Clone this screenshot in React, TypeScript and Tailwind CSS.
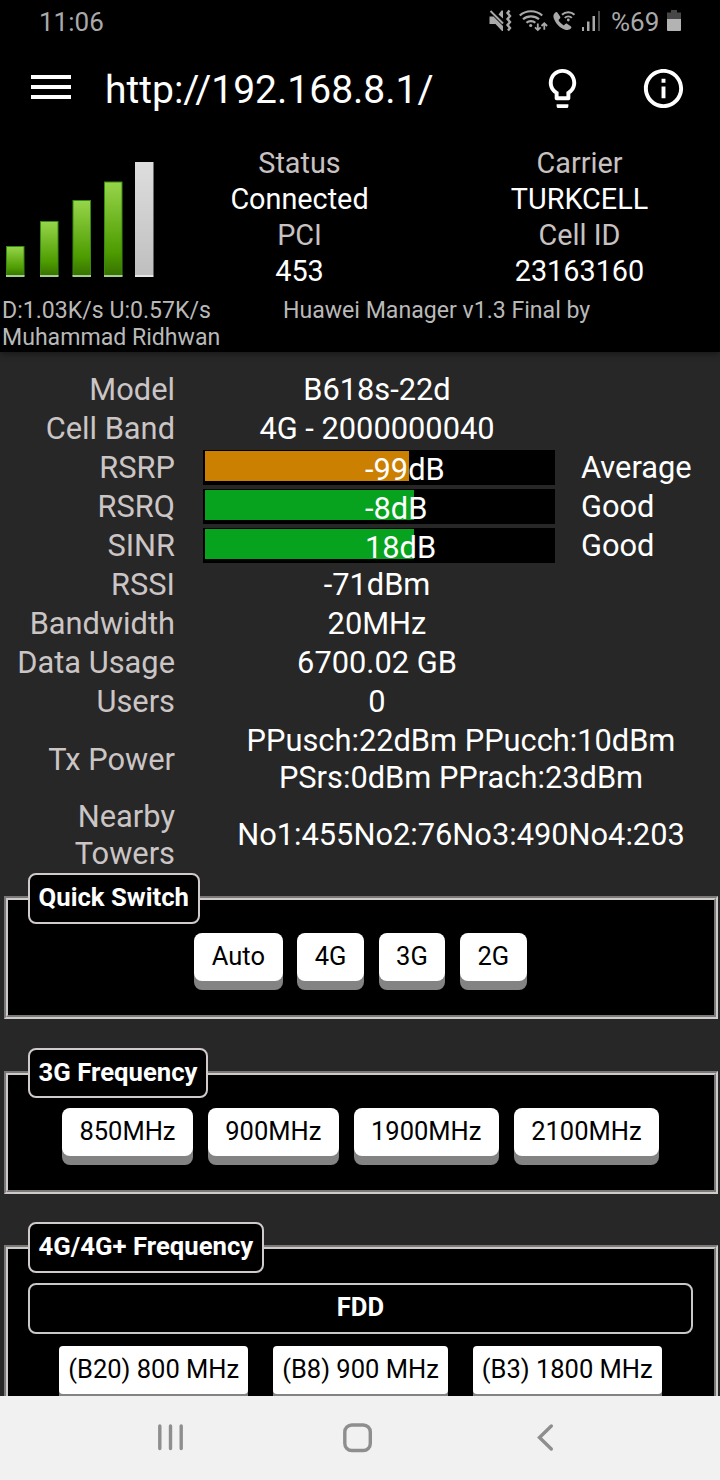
import React from "react";
import { clsx } from "clsx";
import { MdInfoOutline, MdLightbulbOutline } from "react-icons/md";

interface SignalRow {
    label: string;
    value: string;
    percent: number;
    color: string;
    quality: string;
}

const signalBars = [
    { x: 6, top: 246 },
    { x: 40, top: 221 },
    { x: 72.5, top: 200 },
    { x: 104, top: 181.5 },
];

const signalRows: SignalRow[] = [
    {
        label: "RSRP",
        value: "-99dB",
        percent: 58.6,
        color: "bg-[#cb8001]",
        quality: "Average",
    },
    {
        label: "RSRQ",
        value: "-8dB",
        percent: 60,
        color: "bg-[#08a31e]",
        quality: "Good",
    },
    {
        label: "SINR",
        value: "18dB",
        percent: 60,
        color: "bg-[#08a31e]",
        quality: "Good",
    },
];

const StatusBar: React.FC = () => (
    <div className="flex h-11 items-center pl-[39px] text-[26px] leading-none text-[#a9a9a9]">
        <span className="w-[447px]">11:06</span>
        <svg width="120" height="44" viewBox="486 0 120 44" fill="#a9a9a9">
            <path d="M489.500 16.500h4l9.500 9.500v5h-1l-6.500-7h-6zM498.500 14.500l3-4h1.500v8z" />
            <path
                d="M490.500 11l12.500 12.500"
                stroke="#a9a9a9"
                strokeWidth="2"
                fill="none"
            />
            <path
                d="M509.500 10.500l-2 2.500 2.500 3-2.500 3 2.500 3-2.500 3 2.500 3-2 2.500"
                stroke="#a9a9a9"
                strokeWidth="2.400"
                fill="none"
            />
            <g fill="none" stroke="#a9a9a9" strokeWidth="2.200">
                <path d="M519.800 15.500c6-5.700 16.400-5.700 22.400 0" />
                <path d="M523 19.300c4.300-4 11.700-4 16 0" />
                <path d="M526.500 22.800c2.300-2.200 6.500-2.200 8.800 0" />
                <path d="M537.800 23.500v6.500M535 27.300l2.800 2.800 2.800-2.800" strokeWidth="1.800" />
                <path d="M544.300 29.700v-6.500M541.500 26l2.800-2.800 2.800 2.800" strokeWidth="1.800" />
            </g>
            <circle cx="530.700" cy="25.500" r="1.600" />
            <path d="M555 12.800c1-1 2-.9 2.700.1l2.400 3.700c.5.900.3 1.500-.4 2.200l-1.200 1.200c1.100 2.300 3 4.200 5.400 5.400l1.300-1.300c.7-.7 1.400-.8 2.200-.2l3.300 2.300c.9.700.9 1.600.1 2.400-1.500 1.500-3.300 1.800-5.600 1.100-5-1.500-9.500-6.300-11.400-11.300-.8-2.300-.4-4.100 1.200-5.600z" />
            <g fill="none" stroke="#a9a9a9" strokeWidth="2">
                <path d="M562 14.800c3.500-3.500 9-3.500 12.500 0" />
                <path d="M564.800 17.900c2-2 5-2 7 0" />
            </g>
            <circle cx="568.300" cy="20" r="1.400" />
            <path d="M582 27h2v4h-2zM587 21.500h2.500V31h-2.500zM592.500 16h2.500v15h-2.500z" />
            <path d="M598 11h2v20h-2z" fill="#4c4c4c" />
        </svg>
        <span className="ml-[5px] w-[56px]">%69</span>
        <svg width="14" height="44" viewBox="667 0 14 44">
            <path d="M671 10h6v2.500h4V19h-14v-6.500h4z" fill="#474747" />
            <path d="M667 19h14v11a1 1 0 0 1-1 1h-12a1 1 0 0 1-1-1z" fill="#b3b3b3" />
        </svg>
    </div>
);

const Toolbar: React.FC = () => (
    <div className="flex h-[90px] items-center pl-[31px]">
        <div className="flex w-10 flex-col gap-1.5 pb-1">
            <span className="h-1 bg-white" />
            <span className="h-1 bg-white" />
            <span className="h-1 bg-white" />
        </div>
        <h1 className="mt-0.5 ml-[34px] flex-1 text-[39px] leading-none">
            http://192.168.8.1/
        </h1>
        <MdLightbulbOutline className="-mt-0.5 mr-[54px] size-[47px]" />
        <MdInfoOutline className="-mt-0.5 mr-[33px] size-[47px]" />
    </div>
);

const SignalMeter: React.FC = () => (
    <svg width="160" height="144" viewBox="0 145 160 144" className="shrink-0">
        <defs>
            <linearGradient id="green" x1="0" y1="0" x2="0" y2="1">
                <stop offset="0" stopColor="#97d54a" />
                <stop offset="0.75" stopColor="#4d9c00" />
                <stop offset="1" stopColor="#377100" />
            </linearGradient>
            <linearGradient id="gray" x1="0" y1="0" x2="0" y2="1">
                <stop offset="0" stopColor="#dedede" />
                <stop offset="1" stopColor="#bfbfbf" />
            </linearGradient>
        </defs>
        {signalBars.map((bar) => (
            <g key={bar.x}>
                <rect
                    x={bar.x + 0.5}
                    y={bar.top + 0.5}
                    width="17.500"
                    height={275 - bar.top}
                    fill="url(#green)"
                    stroke="#368a12"
                />
                <rect x={bar.x} y="275" width="18.500" height="2" fill="#a6cf98" />
            </g>
        ))}
        <rect x="135" y="162" width="18.500" height="113" fill="url(#gray)" />
        <rect x="135" y="275" width="18.500" height="2" fill="#e6e6e6" />
    </svg>
);

const Stats: React.FC<{ items: [string, string][] }> = ({ items }) => (
    <div className="flex-1 pr-px text-center text-[28.8px] leading-9">
        {items.map(([label, value]) => (
            <React.Fragment key={label}>
                <p className="text-[#c8c2c2]">{label}</p>
                <p>{value}</p>
            </React.Fragment>
        ))}
    </div>
);

const InfoRow: React.FC<
    React.PropsWithChildren<{ label: string; wide?: boolean }>
> = ({ label, wide, children }) => (
    <div className="flex items-center">
        <div className="w-[175px] text-right whitespace-pre-line text-[#cbc5c5]">
            {label}
        </div>
        <div
            className={clsx(
                "text-center",
                wide ? "ml-[27px] w-[518px]" : "ml-[26px] w-[352px]"
            )}>
            {children}
        </div>
    </div>
);

const SignalInfoRow: React.FC<{ row: SignalRow }> = ({ row }) => (
    <div className="flex h-[37px] items-center">
        <div className="w-[175px] text-right text-[#cbc5c5]">{row.label}</div>
        <div className="relative -mt-px ml-7 h-[35px] w-[352px] bg-black px-0.5 pt-px">
            <div
                className={clsx("h-[30px]", row.color)}
                style={{ width: `${row.percent}%` }}
            />
            <span className="absolute top-0 left-[162px] leading-[39px]">
                {row.value}
            </span>
        </div>
        <div className="ml-[26px]">{row.quality}</div>
    </div>
);

const Panel: React.FC<React.PropsWithChildren<{ title: string }>> = ({
    title,
    children,
}) => (
    <fieldset className="mr-0.5 ml-1 border-4 border-[#cfcaca] bg-black px-5 [border-style:groove]">
        <legend className="h-[50.5px] rounded-[8px] border-2 border-[#d0caca] bg-black px-[8.6px] text-[25.7px] leading-[45px] font-bold">
            {title}
        </legend>
        {children}
    </fieldset>
);

const SwitchButton: React.FC<{ text: string }> = ({ text }) => (
    <button className="h-12 rounded-[8px] bg-white px-[17.5px] pb-px text-[25.5px] text-black shadow-[0_9px_0_#838383]">
        {text}
    </button>
);

const BandButton: React.FC<{ text: string }> = ({ text }) => (
    <button className="h-12 rounded-[4px] bg-white px-[9px] pb-px text-[25.5px] text-black shadow-[0_9px_0_#838383]">
        {text}
    </button>
);

const NavigationBar: React.FC = () => (
    <div className="flex h-[84px] shrink-0 items-center bg-[#f1f1f1]">
        <svg
            width="720"
            height="84"
            viewBox="0 1396 720 84"
            fill="none"
            stroke="#8e8e8e"
            strokeWidth="3.400"
            strokeLinecap="round">
            <path d="M159.800 1426v22.500M170.500 1426v22.500M181.200 1426v22.500" />
            <rect x="344.800" y="1425" width="25.500" height="25.500" rx="7" />
            <path d="M551.300 1426l-11.800 11.500 11.800 11.500" />
        </svg>
    </div>
);

export default function App() {
    return (
        <div className="flex h-[1480px] w-[720px] flex-col overflow-hidden bg-[#272727] font-['Roboto',sans-serif] text-white">
            <header className="h-[352px] shrink-0 bg-black shadow-[0_2px_6px_rgba(0,0,0,0.4)]">
                <StatusBar />
                <Toolbar />
                <div className="mt-[11px] flex">
                    <SignalMeter />
                    <Stats
                        items={[
                            ["Status", "Connected"],
                            ["PCI", "453"],
                        ]}
                    />
                    <Stats
                        items={[
                            ["Carrier", "TURKCELL"],
                            ["Cell ID", "23163160"],
                        ]}
                    />
                </div>
                <p className="mt-2 pl-0.5 text-[23.1px] leading-[27px] text-[#b9b9b9]">
                    D:1.03K/s U:0.57K/s
                    <span className="ml-[72px]">Huawei Manager v1.3 Final by</span>
                    <br />
                    Muhammad Ridhwan
                </p>
            </header>

            <main className="min-h-0 flex-1 overflow-hidden">
                <div className="mt-[19px] flex flex-col gap-0.5 text-[30.8px] leading-[37px]">
                    <InfoRow label="Model">B618s-22d</InfoRow>
                    <InfoRow label="Cell Band">4G - 2000000040</InfoRow>
                    {signalRows.map((row) => (
                        <SignalInfoRow key={row.label} row={row} />
                    ))}
                    <InfoRow label="RSSI">-71dBm</InfoRow>
                    <InfoRow label="Bandwidth">20MHz</InfoRow>
                    <InfoRow label="Data Usage">6700.02 GB</InfoRow>
                    <InfoRow label="Users">0</InfoRow>
                    <InfoRow label="Tx Power" wide>
                        PPusch:22dBm PPucch:10dBm
                        <br />
                        PSrs:0dBm PPrach:23dBm
                    </InfoRow>
                    <InfoRow label={"Nearby\nTowers"} wide>
                        <p className="pb-px">No1:455No2:76No3:490No4:203</p>
                    </InfoRow>
                </div>

                <div className="mt-px flex flex-col gap-[28.5px]">
                    <Panel title="Quick Switch">
                        <div className="flex h-[91.5px] justify-center gap-[14.7px] pt-[9.5px] pr-px">
                            <SwitchButton text="Auto" />
                            <SwitchButton text="4G" />
                            <SwitchButton text="3G" />
                            <SwitchButton text="2G" />
                        </div>
                    </Panel>
                    <Panel title="3G Frequency">
                        <div className="flex h-[91.5px] justify-center gap-[14.7px] pt-[9.5px] pr-px">
                            <SwitchButton text="850MHz" />
                            <SwitchButton text="900MHz" />
                            <SwitchButton text="1900MHz" />
                            <SwitchButton text="2100MHz" />
                        </div>
                    </Panel>
                    <Panel title="4G/4G+ Frequency">
                        <div className="mt-2.5 mr-[1px] h-[51px] rounded-[8px] border-2 border-[#c8c8c8] text-center text-[25.6px] leading-[45px] font-bold">
                            FDD
                        </div>
                        <div className="mt-3 flex h-40 justify-center gap-[25px] pr-px">
                            <BandButton text="(B20) 800 MHz" />
                            <BandButton text="(B8) 900 MHz" />
                            <BandButton text="(B3) 1800 MHz" />
                        </div>
                    </Panel>
                </div>
            </main>

            <NavigationBar />
        </div>
    );
}
